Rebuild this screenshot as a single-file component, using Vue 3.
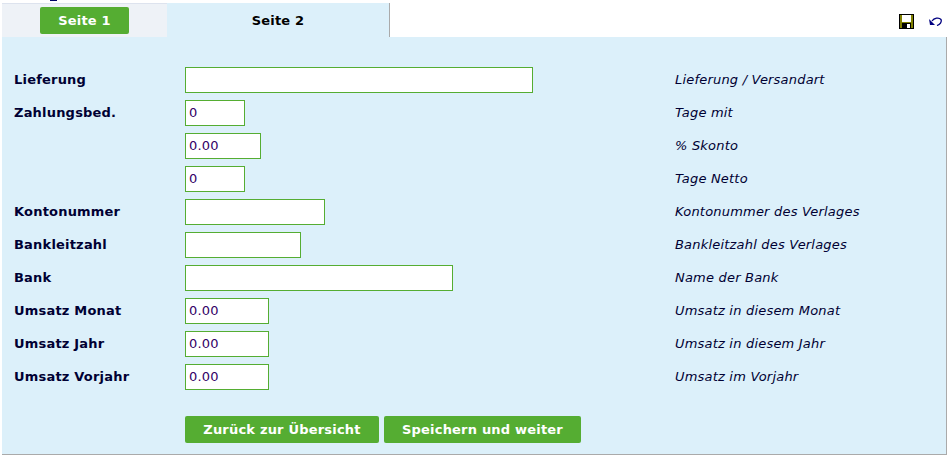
<script setup>
const rows = [
  { label: 'Lieferung', value: '', width: 348, hint: 'Lieferung / Versandart' },
  { label: 'Zahlungsbed.', value: '0', width: 60, hint: 'Tage mit' },
  { label: '', value: '0.00', width: 76, hint: '% Skonto' },
  { label: '', value: '0', width: 60, hint: 'Tage Netto' },
  { label: 'Kontonummer', value: '', width: 140, hint: 'Kontonummer des Verlages' },
  { label: 'Bankleitzahl', value: '', width: 116, hint: 'Bankleitzahl des Verlages' },
  { label: 'Bank', value: '', width: 268, hint: 'Name der Bank' },
  { label: 'Umsatz Monat', value: '0.00', width: 84, hint: 'Umsatz in diesem Monat' },
  { label: 'Umsatz Jahr', value: '0.00', width: 84, hint: 'Umsatz in diesem Jahr' },
  { label: 'Umsatz Vorjahr', value: '0.00', width: 84, hint: 'Umsatz im Vorjahr' },
];
</script>

<template>
  <div class="page">
    <div class="top-strip"><span class="cut-off"></span></div>
    <div class="tabbar">
      <div class="tab tab-off"><a class="btn tab-btn">Seite 1</a></div>
      <div class="tab tab-on">Seite 2</div>
      <div class="tools">
        <svg width="15" height="15" viewBox="0 0 15 15">
          <rect x="0" y="0" width="15" height="15" fill="#000" />
          <rect x="1" y="1" width="13" height="13" fill="#808000" />
          <rect x="3" y="1" width="9" height="7" fill="#fff" />
          <rect x="3" y="9" width="9" height="6" fill="#000" />
          <rect x="8" y="10" width="3" height="4" fill="#fff" />
        </svg>
        <svg width="13" height="9" viewBox="0 0 13 9">
          <path d="M3 4 C5 1 10 0 12 2.500 C13 5 11 7.500 8 8.500" fill="none" stroke="#000080" stroke-width="1.300" />
          <path d="M0 2 L1 8 L6 8 Z" fill="#000080" />
        </svg>
      </div>
    </div>
    <div class="panel">
      <div v-for="(row, i) in rows" :key="i" class="row">
        <label class="label">{{ row.label }}</label>
        <div class="field">
          <input class="input" :style="{ width: row.width + 'px' }" :value="row.value" />
        </div>
        <div class="hint">{{ row.hint }}</div>
      </div>
      <div class="actions">
        <button class="btn btn-back">Zurück zur Übersicht</button>
        <button class="btn btn-next">Speichern und weiter</button>
      </div>
    </div>
  </div>
</template>

<style>
html, body {
  margin: 0;
  background: #fff;
}
</style>

<style scoped>
.page {
  width: 949px;
  height: 458px;
  font-family: "DejaVu Sans", Verdana, sans-serif;
  font-size: 13px;
  letter-spacing: 0.2px;
  color: #000033;
  overflow: hidden;
}
.top-strip {
  height: 3px;
  position: relative;
}
.cut-off {
  position: absolute;
  left: 50px;
  top: 0;
  width: 7px;
  height: 1px;
  background: #000066;
}
.tabbar {
  display: flex;
  height: 34px;
  padding-left: 2px;
}
.tab {
  display: flex;
  align-items: center;
  justify-content: center;
  box-sizing: border-box;
  height: 34px;
}
.tab-off {
  width: 165px;
  background: #eef2f7;
  border-top: 1px solid #dde3ee;
}
.tab-on {
  width: 223px;
  background: #dcf0fa;
  border-right: 1px solid #aaa;
  font-weight: bold;
  color: #000;
}
.tools {
  margin-left: auto;
  display: flex;
  align-items: center;
  gap: 15px;
  padding: 2px 7px 0 0;
}
.btn {
  display: inline-flex;
  align-items: center;
  justify-content: center;
  box-sizing: border-box;
  height: 27px;
  padding: 0;
  background: #55ad32;
  color: #fff;
  border: 0;
  border-radius: 2px;
  font-family: inherit;
  font-size: 13px;
  letter-spacing: 0.2px;
  font-weight: bold;
}
.tab-btn {
  width: 89px;
}
.btn-back {
  width: 194px;
}
.btn-next {
  width: 197px;
}
.panel {
  box-sizing: border-box;
  margin-left: 2px;
  margin-right: 2px;
  height: 418px;
  padding: 26px 0 0 12px;
  background: #dcf0fa;
  border-right: 1px solid #aaa;
  border-bottom: 1px solid #aaa;
}
.row {
  display: flex;
  align-items: center;
  height: 33px;
}
.label {
  width: 171px;
  font-weight: bold;
}
.field {
  width: 490px;
}
.input {
  display: block;
  box-sizing: border-box;
  height: 26px;
  padding: 0 3px;
  border: 1px solid #55ad32;
  background: #fff;
  color: #330066;
  font-family: inherit;
  font-size: 13px;
  letter-spacing: 0.2px;
  outline: none;
}
.hint {
  font-style: italic;
}
.actions {
  display: flex;
  gap: 5px;
  margin-top: 23px;
  padding-left: 171px;
}
</style>
